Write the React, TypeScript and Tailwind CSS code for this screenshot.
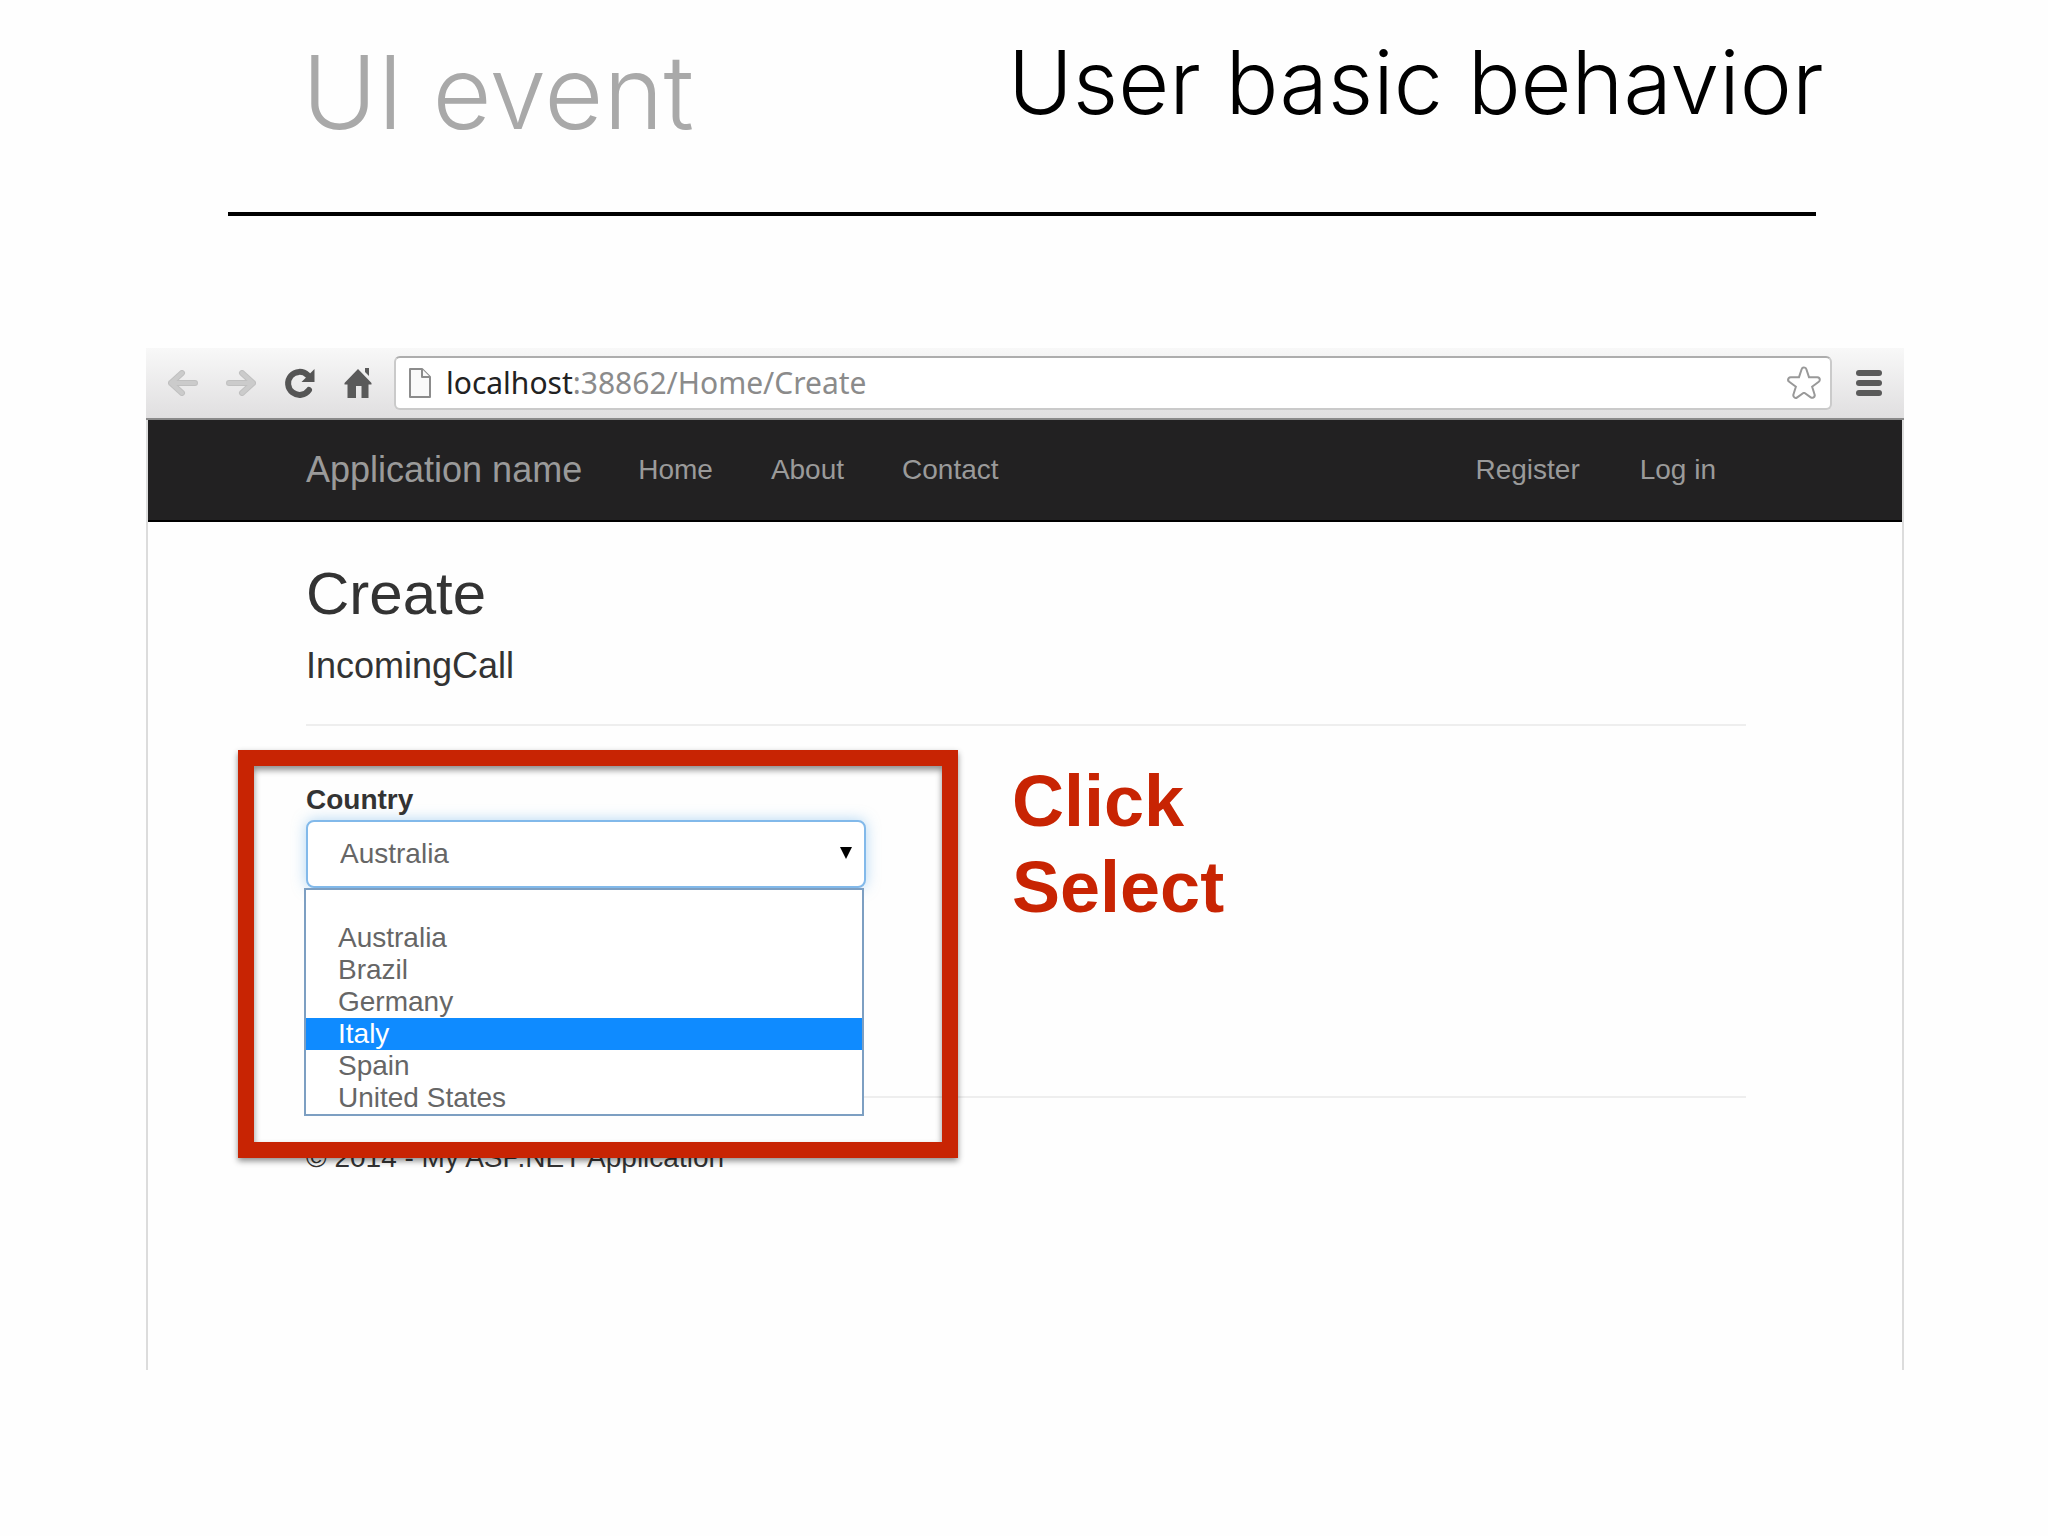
import React, { useState } from 'react';

const COUNTRIES = ['', 'Australia', 'Brazil', 'Germany', 'Italy', 'Spain', 'United States'];

const NAV_LINKS = ['Home', 'About', 'Contact'];
const ACCOUNT_LINKS = ['Register', 'Log in'];

const STAR_PATH = 'M18 5 L21.200 14.600 L31.300 14.700 L23.200 20.700 L26.200 30.300 L18 24.500 L9.800 30.300 L12.800 20.700 L4.700 14.700 L14.800 14.600 Z';

const ArrowIcon = ({ className = '' }: { className?: string }) => (
  <svg viewBox="0 0 30 26" className={`w-[30px] h-[26px] ${className}`} fill="none" strokeLinecap="round" strokeLinejoin="round">
    <path d="M14 3 L3 13 L14 23 M3 13 H27" stroke="#c0c0c0" strokeWidth="6" />
    <path d="M14 3 L3 13 L14 23 M3 13 H27" stroke="#cbcbcb" strokeWidth="4" />
  </svg>
);

const ReloadIcon = () => (
  <svg viewBox="0 0 32 32" className="w-8 h-8" fill="none">
    <path d="M25 23 A11.500 11.500 0 1 1 23.500 8" stroke="#555" strokeWidth="6" strokeLinecap="round" />
    <path d="M30.500 2 V15 H17.500 Z" fill="#555" />
  </svg>
);

const HomeIcon = () => (
  <svg viewBox="0 0 28 30" className="w-7 h-[30px]" fill="#5a5a5a">
    <path d="M14 1 L27.500 15 V16.500 H24.500 V30 H17.500 V18 H12 V30 H3.500 V16.500 H0.500 V15 Z" />
    <path d="M21 0 H25 V8 L21 4 Z" />
  </svg>
);

const PageIcon = () => (
  <svg viewBox="0 0 24 32" className="w-6 h-8 shrink-0" fill="#fafafa" stroke="#8c8c8c" strokeWidth="2" strokeLinejoin="round">
    <path d="M2 2 H14 L22 10 V30 H2 Z" />
    <path d="M14 2 V10 H22" />
  </svg>
);

const StarIcon = () => (
  <svg viewBox="0 0 36 36" className="w-9 h-9" strokeLinejoin="round">
    <path d={STAR_PATH} fill="#999" stroke="#999" strokeWidth="7" />
    <path d={STAR_PATH} fill="#fff" stroke="#fff" strokeWidth="3" />
  </svg>
);

const MenuIcon = () => (
  <svg viewBox="0 0 26 26" className="w-[26px] h-[26px]" fill="#5a5a5a">
    <rect y="0" width="26" height="6" rx="3" />
    <rect y="10" width="26" height="6" rx="3" />
    <rect y="20" width="26" height="6" rx="3" />
  </svg>
);

const Toolbar = () => (
  <div className="flex items-center h-[72px] px-[22px] border-b-2 border-[#8a8a8a] bg-linear-to-b from-[#f8f8f8] to-[#e0dfe0]">
    <div className="flex items-center gap-7">
      <button aria-label="Back"><ArrowIcon /></button>
      <button aria-label="Forward"><ArrowIcon className="rotate-180" /></button>
      <button aria-label="Reload"><ReloadIcon /></button>
      <button aria-label="Home page"><HomeIcon /></button>
    </div>
    <div className="flex items-center flex-1 h-[54px] ml-[22px] mr-6 pl-3 pr-2 bg-white border-2 border-t-[#adadad] border-[#cacaca] rounded-md">
      <PageIcon />
      <p className="flex-1 ml-3.5 text-[30px] leading-9 text-[#8b8b8b] font-['Noto_Sans',sans-serif]">
        <span className="text-[#222]">localhost</span>:38862/Home/Create
      </p>
      <button aria-label="Bookmark"><StarIcon /></button>
    </div>
    <button aria-label="Menu"><MenuIcon /></button>
  </div>
);

const Navbar = () => (
  <nav className="flex items-center h-[102px] pl-[158px] pr-[186px] bg-[#222122] border-b-2 border-black text-[28px] text-[#9a9a9a]">
    <a href="#" className="text-[36px]">Application name</a>
    <div className="flex gap-[58px] ml-14">
      {NAV_LINKS.map((link) => <a key={link} href="#">{link}</a>)}
    </div>
    <div className="flex gap-[60px] ml-auto">
      {ACCOUNT_LINKS.map((link) => <a key={link} href="#">{link}</a>)}
    </div>
  </nav>
);

const CountryField = () => {
  const [country, setCountry] = useState('Australia');
  const [active, setActive] = useState('Italy');

  return (
    <div className="relative w-[560px]">
      <label htmlFor="country" className="block text-[28px] leading-10 font-bold text-[#333]">Country</label>
      <select
        id="country"
        value={country}
        onChange={(e) => setCountry(e.target.value)}
        className="block appearance-none w-full h-[68px] px-8 bg-white border-2 border-[#82b9ea] rounded-lg text-[28px] text-[#666] shadow-[0_0_14px_rgba(102,175,233,0.5)] outline-none"
      >
        {COUNTRIES.map((name) => <option key={name}>{name}</option>)}
      </select>
      <svg viewBox="0 0 12 12" className="absolute right-3.5 top-[67px] w-3 h-3 pointer-events-none">
        <path d="M0 0 H12 L6 12 Z" />
      </svg>

      {/* Open list */}
      <ul role="listbox" aria-label="Country" className="absolute -left-0.5 top-full w-full bg-white border-2 border-[#7d9fc2] text-[28px] leading-8 text-[#666]">
        {COUNTRIES.map((name) => (
          <li
            key={name}
            role="option"
            aria-selected={name === active}
            onMouseEnter={() => setActive(name)}
            className={`h-8 px-8 ${name === active ? 'bg-[#0f8bff] text-white' : ''}`}
          >
            {name}
          </li>
        ))}
      </ul>
    </div>
  );
};

// Red frame and captions laid over the form
const Callout = () => (
  <>
    <div className="absolute -left-[68px] top-6 w-[720px] h-[408px] border-[16px] border-[#c82403] shadow-[0_3px_6px_rgba(0,0,0,0.45),inset_0_4px_6px_rgba(0,0,0,0.45)] pointer-events-none" />
    <p className="absolute left-[706px] top-8 text-[72px] leading-[86px] font-bold text-[#c82403]">
      Click<br />Select
    </p>
  </>
);

export default function App() {
  return (
    <div className="min-h-screen bg-[#fefefe] font-['Liberation_Sans',Arial,sans-serif]">
      <header className="flex items-start h-[216px] ml-[228px] mr-[232px] border-b-4 border-black font-['Inter',sans-serif] whitespace-nowrap">
        <h2 className="w-[706px] shrink-0 pl-[74px] pt-7 text-[102px] leading-[128px] font-light text-[#a9a9a9]">UI event</h2>
        <h1 className="pl-[74px] pt-6 text-[88px] leading-[116px] font-light text-black">User basic behavior</h1>
      </header>

      <main className="mt-[132px] ml-[146px] mr-[144px]">
        <Toolbar />
        <div className="border-x-2 border-[#dcdcdc]">
          <Navbar />
          <div className="pl-[158px] pr-[156px] pb-48 text-[#333]">
            <h2 className="pt-9 text-[60px] leading-[72px]">Create</h2>
            <h4 className="mt-4 text-[36px] leading-[40px]">IncomingCall</h4>
            <form className="relative mt-[38px] pt-[54px] h-[374px] border-y-2 border-[#eee]">
              <CountryField />
              <Callout />
            </form>
            <footer className="mt-10 text-[28px] leading-10">© 2014 - My ASP.NET Application</footer>
          </div>
        </div>
      </main>
    </div>
  );
}
